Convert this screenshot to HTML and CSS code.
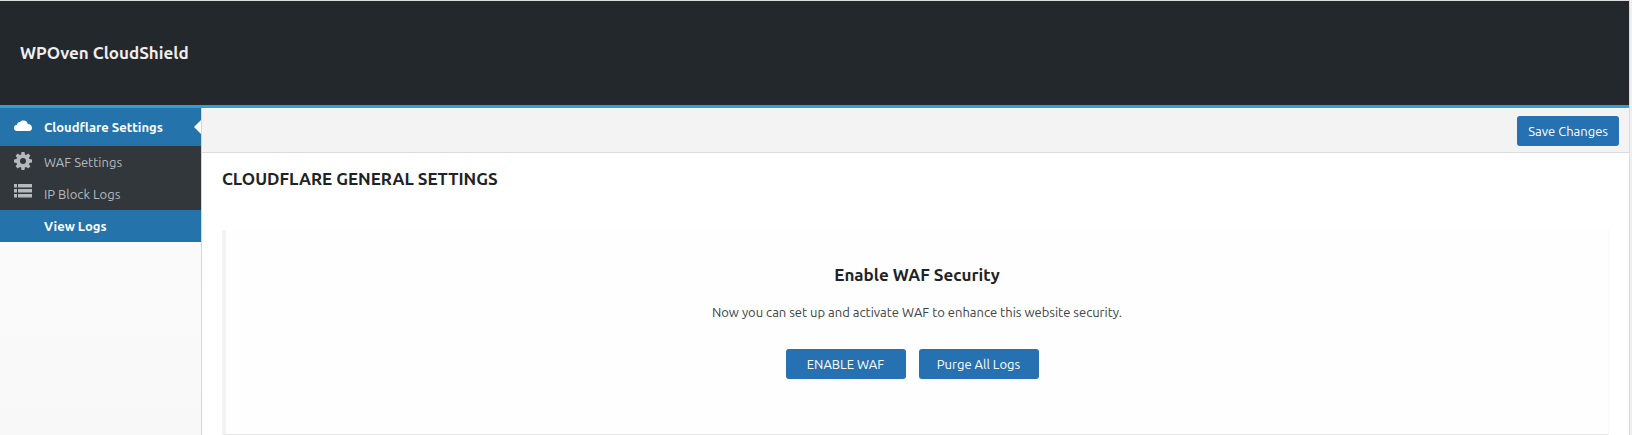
FILE: index.html
```html
<!DOCTYPE html>
<html lang="en">
<head>
<meta charset="utf-8">
<title>WPOven CloudShield</title>
<link rel="stylesheet" href="styles.css">
</head>
<body>
<div class="panel">
  <header class="header"><h1 class="brand">WPOven CloudShield</h1></header>
  <div class="columns">
    <nav class="sidebar">
      <a class="item item-parent" href="#">
        <svg class="icon" viewBox="0 0 18 18" aria-hidden="true"><path d="M3 14a3 3 0 0 1-3-3c0-2 1.300-3.200 3-3.200C3.300 5.800 4.600 4.900 6 5.100 7 3.700 8.100 3.500 9.600 3.500c2.400 0 4 1.500 4.100 3.500C16.300 7 18 8.600 18 11c0 1.800-1.200 3-3 3z"/></svg>
        <span>Cloudflare Settings</span>
      </a>
      <a class="item" href="#">
        <svg class="icon" viewBox="0 0 18 18" aria-hidden="true"><path fill-rule="evenodd" d="M7.500 0h3l.4 2.500 1.300.6L14.300 1.600l2.100 2.100-1.500 2.100.6 1.300 2.500.4v3l-2.500.4-.6 1.300 1.500 2.100-2.100 2.100-2.100-1.500-1.300.6-.4 2.500h-3l-.4-2.500-1.300-.6-2.100 1.500-2.100-2.100 1.500-2.100-.6-1.300L0 10.500v-3l2.500-.4.6-1.300L1.600 3.700l2.100-2.100 2.100 1.500 1.300-.6zM9 6a3 3 0 1 0 0 6 3 3 0 0 0 0-6z"/></svg>
        <span>WAF Settings</span>
      </a>
      <a class="item" href="#">
        <svg class="icon" viewBox="0 0 18 18" aria-hidden="true"><path d="M0 0h3v3.500H0zM4 0h14v3.500H4zM0 5h3v3.500H0zM4 5h14v3.500H4zM0 10h3v3.500H0zM4 10h14v3.500H4z"/></svg>
        <span>IP Block Logs</span>
      </a>
      <a class="item item-active" href="#"><span class="icon"></span><span>View Logs</span></a>
    </nav>
    <main class="main">
      <div class="toolbar"><button class="button" type="button">Save Changes</button></div>
      <section class="content">
        <h2 class="title">CLOUDFLARE GENERAL SETTINGS</h2>
        <div class="card">
          <h3 class="card-title">Enable WAF Security</h3>
          <p class="card-text">Now you can set up and activate WAF to enhance this website security.</p>
          <div class="actions">
            <button class="button button-wide" type="button">ENABLE WAF</button>
            <button class="button button-wide" type="button">Purge All Logs</button>
          </div>
        </div>
      </section>
    </main>
  </div>
</div>
</body>
</html>
```
FILE: styles.css
```css
* { box-sizing: border-box; }
body {
  margin: 0;
  background: #f0f0f1;
  color: #3c434a;
  font: 13px/20px Ubuntu, "Noto Sans", sans-serif;
}
h1, h2, h3, p { margin: 0; }
.panel {
  margin-right: 2px;
  border: solid #dcdcde;
  border-width: 1px 1px 0 0;
  background: #fff;
}
.header {
  display: flex;
  align-items: center;
  padding: 40px 20px;
  background: #23282d;
  border-bottom: 3px solid #309fd4;
}
.brand { color: #eee; font-size: 17px; line-height: 24px; font-weight: 700; }
.columns { display: flex; }
.sidebar {
  width: 202px;
  flex: none;
  background: linear-gradient(#fcfcfc, #f8f8f8);
  border-right: 1px solid #d5d5d5;
}
.item {
  position: relative;
  display: flex;
  align-items: center;
  gap: 12px;
  padding: 6px 14px;
  background: #32373c;
  color: #b4b9be;
  text-decoration: none;
}
.item-parent { padding-block: 9px; }
.item-parent, .item-active { background: #2473aa; color: #fff; font-weight: 700; }
.item-parent::after {
  content: "";
  position: absolute;
  right: 0;
  top: 12px;
  border: solid transparent;
  border-width: 7px 7px 7px 0;
  border-right-color: #fff;
}
.icon { width: 18px; height: 18px; flex: none; margin-bottom: 2px; fill: currentColor; }
.main { flex: 1; min-width: 0; }
.toolbar {
  display: flex;
  justify-content: flex-end;
  padding: 7px 10px 6px;
  background: #f3f3f3;
  border-top: 1px solid #fff;
  border-bottom: 1px solid #dcdcdc;
}
.button {
  height: 30px;
  padding: 0 11px;
  border: 0;
  border-radius: 3px;
  background: #2671b1;
  color: #fff;
  font: inherit;
  white-space: nowrap;
}
.button-wide { width: 120px; }
.content { padding: 14px 20px 0; }
.title { color: #1d2327; font-size: 17px; line-height: 24px; font-weight: 700; }
.card {
  margin-top: 39px;
  padding: 33px 0 55px;
  border: solid #f3f3f3;
  border-width: 0 1px 1px 4px;
  border-right-color: #fafafa;
  border-bottom-color: #e5e5e5;
  background: #fefefe;
  text-align: center;
}
.card-title { color: #1d2327; font-size: 17px; line-height: 24px; font-weight: 700; }
.card-text { margin-top: 15px; }
.actions {
  display: flex;
  justify-content: center;
  gap: 13px;
  margin-top: 27px;
  padding-right: 10px;
}
```
